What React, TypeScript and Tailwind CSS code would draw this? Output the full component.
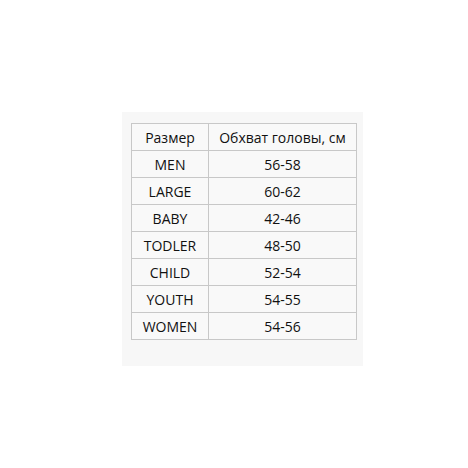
import React from "react";

const rows: [string, string][] = [
  ["MEN", "56-58"],
  ["LARGE", "60-62"],
  ["BABY", "42-46"],
  ["TODLER", "48-50"],
  ["CHILD", "52-54"],
  ["YOUTH", "54-55"],
  ["WOMEN", "54-56"],
];

export default function App() {
  return (
    <div className="w-[468px] h-[468px] bg-white pt-[112px] pl-[122px]" style={{ fontFamily: '"Open Sans", "DejaVu Sans", sans-serif' }}>
      <div className="w-[241px] h-[254px] bg-[#f7f7f7] pt-[11px] pl-[9px]">
        <table className="border-collapse text-[14px] text-[#111] bg-[#f9f9f9]">
          <tbody>
            <tr className="h-[27px]">
              <td className="border border-[#c8c8c8] w-[77px] text-center p-0">Размер</td>
              <td className="border border-[#c8c8c8] w-[148px] text-center p-0">Обхват головы, см</td>
            </tr>
            {rows.map(([a, b]) => (
              <tr key={a} className="h-[27px]">
                <td className="border border-[#c8c8c8] text-center p-0">{a}</td>
                <td className="border border-[#c8c8c8] text-center p-0">{b}</td>
              </tr>
            ))}
          </tbody>
        </table>
      </div>
    </div>
  );
}
